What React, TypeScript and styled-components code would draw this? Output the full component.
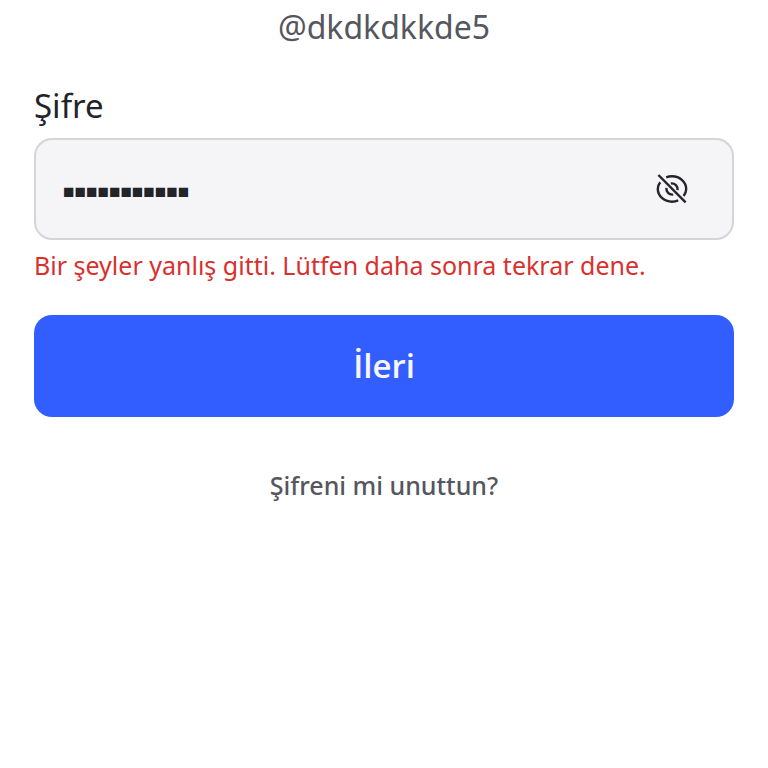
import React, { useState } from "react";
import styled, { createGlobalStyle } from "styled-components";

const GlobalStyle = createGlobalStyle`
  *, *::before, *::after { box-sizing: border-box; }
  body {
    margin: 0;
    background: #ffffff;
    font-family: "Noto Sans", "Open Sans", sans-serif;
  }
`;

const Page = styled.main`
  min-height: 100vh;
  padding: 3px 34px 32px;
  background: #ffffff;
`;

const Username = styled.p`
  margin: 0 0 31px;
  color: #55565e;
  font-size: 32px;
  line-height: 48px;
  text-align: center;
`;

const Form = styled.form`
  display: flex;
  flex-direction: column;
`;

const Label = styled.label`
  margin-bottom: 8px;
  color: #232429;
  font-size: 33px;
  line-height: 48px;
`;

const Field = styled.div`
  display: flex;
  align-items: center;
  height: 102px;
  padding: 0 36px 0 27px;
  border: 2px solid #d4d4d9;
  border-radius: 18px;
  background: #f5f5f8;
`;

const PasswordInput = styled.input<{ $masked: boolean }>`
  flex: 1;
  min-width: 0;
  height: 100%;
  padding: 6px 0 0;
  border: 0;
  outline: 0;
  background: transparent;
  color: #232429;
  font-family: "Liberation Serif", serif;
  font-size: 19px;
  -webkit-text-security: ${({ $masked }) => ($masked ? "square" : "none")};
`;

const IconButton = styled.button`
  display: flex;
  padding: 6px;
  border: 0;
  background: transparent;
  color: #232429;
  cursor: pointer;
`;

const ErrorText = styled.p`
  margin: 7px 0 32px;
  color: #d9302f;
  font-size: 25px;
  line-height: 36px;
`;

const SubmitButton = styled.button`
  height: 102px;
  border: 0;
  border-radius: 18px;
  background: #335eff;
  color: #f5f6ff;
  font-family: "Open Sans", "Noto Sans", sans-serif;
  font-size: 33px;
  font-weight: 600;
  line-height: 48px;
  cursor: pointer;
`;

const ForgotLink = styled.a`
  align-self: center;
  margin-top: 50px;
  color: #55565e;
  font-size: 25px;
  font-weight: 500;
  line-height: 36px;
  text-decoration: none;
`;

function EyeOffIcon() {
  return (
    <svg
      width="36"
      height="36"
      viewBox="0 0 36 36"
      fill="none"
      stroke="currentColor"
      strokeWidth="2.4"
      aria-hidden="true"
    >
      <path d="M4.4 4L31.6 31.4" />
      <path d="M12.2 6.4C14 5.7 16 5.3 18 5.3C26 5.3 32.2 11.2 32.2 18C32.2 20.6 31.2 23 29.6 25" />
      <path d="M6.2 11.2C4.6 13.2 3.8 15.5 3.8 18C3.8 24.8 10 30.7 18 30.7C20.2 30.7 22.4 30.2 24.2 29.4" />
      <path d="M16.8 12.4C21 12 24 15 23.6 19.2" />
      <path d="M12.4 16.8C12 21 15 24 19.2 23.6" />
    </svg>
  );
}

export default function App() {
  const [password, setPassword] = useState("password123");
  const [visible, setVisible] = useState(false);

  return (
    <>
      <GlobalStyle />
      <Page>
        <Username>@dkdkdkkde5</Username>
        <Form onSubmit={(event) => event.preventDefault()}>
          <Label htmlFor="password">Şifre</Label>
          <Field>
            <PasswordInput
              id="password"
              type="text"
              $masked={!visible}
              autoComplete="current-password"
              spellCheck={false}
              value={password}
              onChange={(event) => setPassword(event.target.value)}
              aria-describedby="password-error"
              aria-invalid="true"
            />
            <IconButton
              type="button"
              aria-label={visible ? "Şifreyi gizle" : "Şifreyi göster"}
              onClick={() => setVisible(!visible)}
            >
              <EyeOffIcon />
            </IconButton>
          </Field>
          <ErrorText id="password-error" role="alert">
            Bir şeyler yanlış gitti. Lütfen daha sonra tekrar dene.
          </ErrorText>
          <SubmitButton type="submit">İleri</SubmitButton>
          <ForgotLink href="#forgot">Şifreni mi unuttun?</ForgotLink>
        </Form>
      </Page>
    </>
  );
}
